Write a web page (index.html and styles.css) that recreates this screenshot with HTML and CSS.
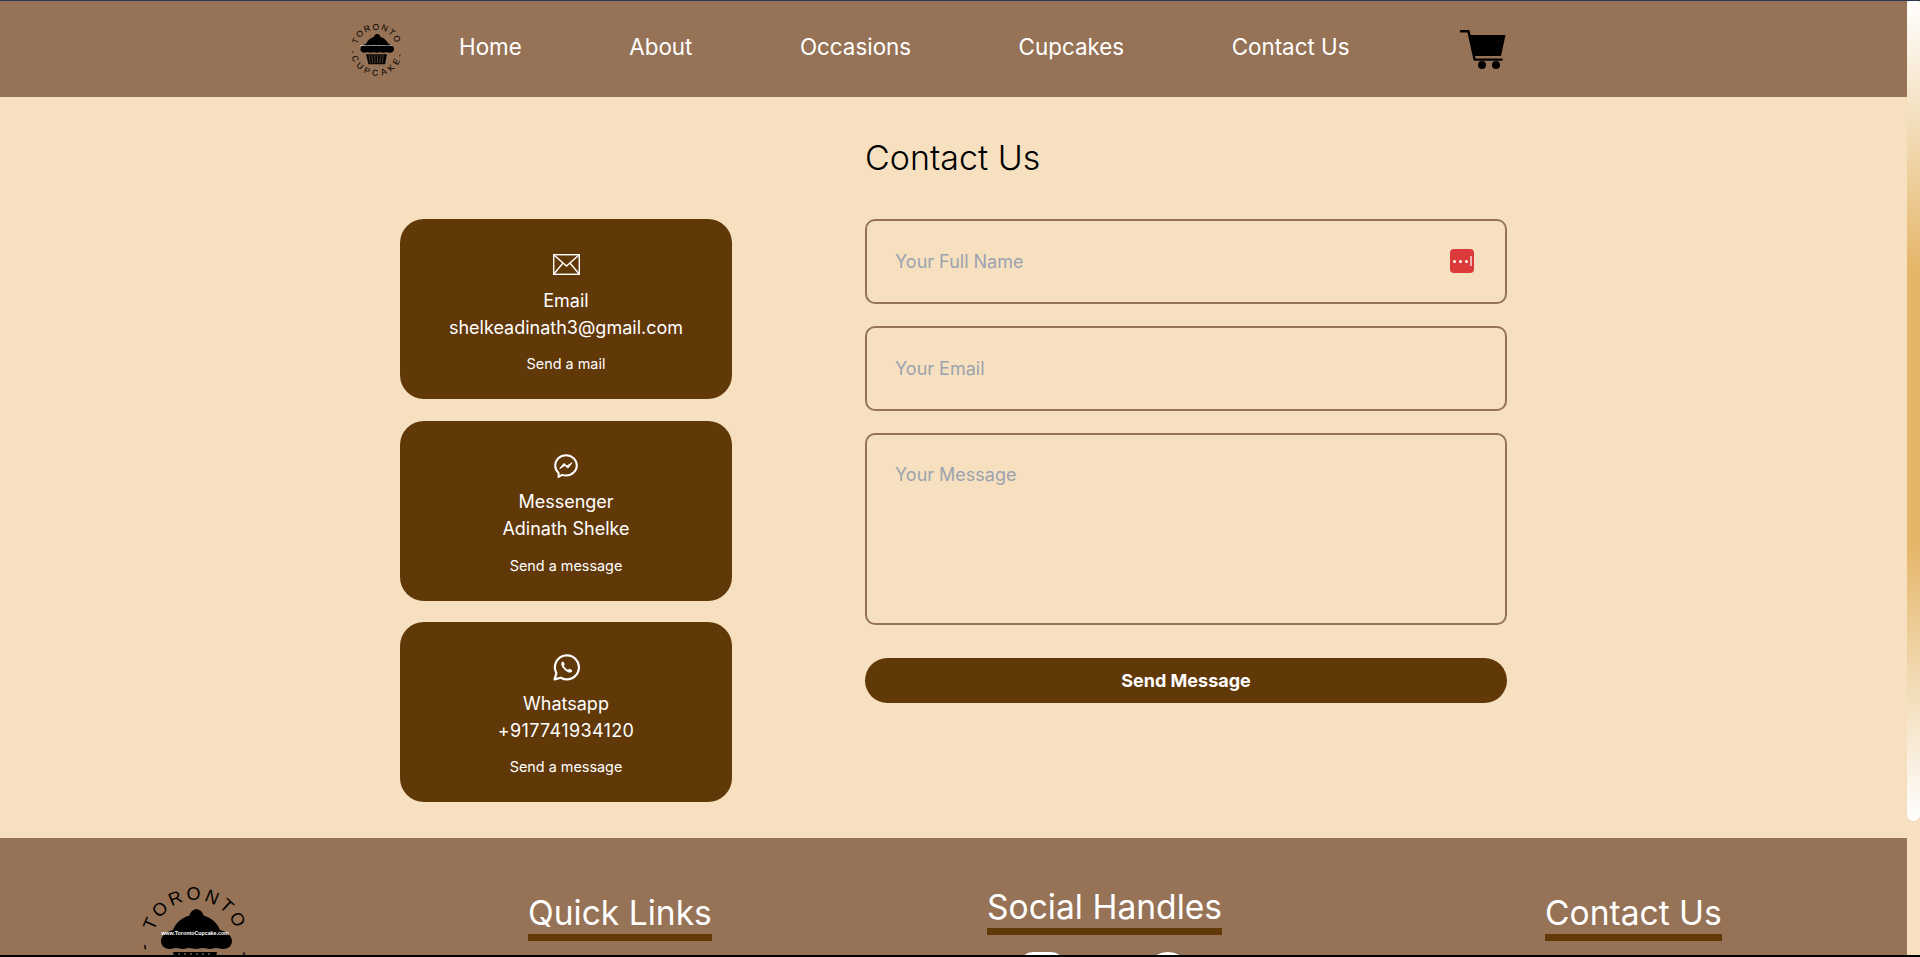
FILE: index.html
```html
<!DOCTYPE html>
<html lang="en">
<head>
  <meta charset="UTF-8">
  <meta name="viewport" content="width=device-width, initial-scale=1.0">
  <title>Toronto Cupcake - Contact Us</title>
  <link rel="stylesheet" href="styles.css">
</head>
<body>
  <div class="page">
    <div class="scroll-area">
      <header class="header">
        <svg class="logo-small" viewBox="0 0 120 120">
          <path id="arcTopA" d="M18 60a42 42 0 0 1 84 0" fill="none"/>
          <path id="arcBottomA" d="M5 60a55 55 0 0 0 110 0" fill="none"/>
          <text class="logo-ring"><textPath href="#arcTopA" startOffset="50%" text-anchor="middle">TORONTO</textPath></text>
          <text class="logo-ring logo-ring-wide"><textPath href="#arcBottomA" startOffset="50%" text-anchor="middle">-CUPCAKE-</textPath></text>
          <path d="M60 27c5 0 8 3 8.500 6.500 8 2 14 8 16.500 14.500 7 2 12 6 12 11 0 5-4 8-9 8-3 0-4-1-7-1s-4 1-6 1c-3 0-4-1-7-1s-4 1-7 1-4-1-7-1-4 1-6 1c-3 0-4-1-7-1s-4 1-6 1c-5 0-9-3-9-8 0-5 5-9 12-11 2.500-6.500 8.500-12.500 16.500-14.500.5-3.500 3.500-6.500 8.500-6.500z"/>
          <path d="M38 70h44l-4 21H43z"/>
          <path d="M44 71l3 18M50 71l2 18M56 71l1 18M62 71v18M68 71l-1 18M74 71l-2 18" stroke="#967256" stroke-width="1.2"/>
          <text class="logo-url" x="60" y="53" text-anchor="middle">www.TorontoCupcake.com</text>
        </svg>
        <nav class="nav">
          <a href="#">Home</a>
          <a href="#">About</a>
          <a href="#">Occasions</a>
          <a href="#">Cupcakes</a>
          <a href="#">Contact Us</a>
        </nav>
        <svg class="cart" viewBox="0 0 46 40">
          <path d="M1 2.200h7.500L14.600 30.600h27" fill="none" stroke="#000" stroke-width="2.400" stroke-linecap="round" stroke-linejoin="round"/>
          <path d="M9 6h36.500L41 27H13.500z"/>
          <circle cx="22" cy="36" r="4"/>
          <circle cx="36" cy="36" r="4"/>
        </svg>
      </header>

      <main class="contact">
        <div></div>
        <h1 class="contact-title">Contact Us</h1>

        <div class="cards">
          <div class="card">
            <div class="card-icon">
              <svg class="icon-mail" viewBox="0 0 27 21" fill="none" stroke="#fff" stroke-width="1.400">
                <rect x=".7" y=".7" width="25.600" height="19.600"/>
                <path d="M.7 .7l12.800 11.300L26.300 .7M.7 20.300l9.300-11.300M26.300 20.300l-9.300-11.300"/>
              </svg>
            </div>
            <p class="card-line">Email</p>
            <p class="card-line">shelkeadinath3@gmail.com</p>
            <a class="card-link" href="#">Send a mail</a>
          </div>
          <div class="card">
            <div class="card-icon">
              <svg class="icon-messenger" viewBox="0 0 24 24" fill="none" stroke="#fff" stroke-width="2">
                <path d="M12 1.200C6 1.200 1.200 5.700 1.200 11.500c0 3 1.300 5.600 3.400 7.500v3.800l3.500-1.900c1.200.4 2.500.6 3.900.6 6 0 10.800-4.500 10.800-10S18 1.200 12 1.200z"/>
                <path d="M5.800 14.500l4.100-5 3 2.600 5.200-3.300-4.200 5.200-3-2.600z" fill="#fff" stroke-width="1" stroke-linejoin="round"/>
              </svg>
            </div>
            <p class="card-line">Messenger</p>
            <p class="card-line">Adinath Shelke</p>
            <a class="card-link" href="#">Send a message</a>
          </div>
          <div class="card">
            <div class="card-icon">
              <svg class="icon-whatsapp" viewBox="0 0 27 27" fill="none" stroke="#fff" stroke-width="2.200">
                <path d="M1.600 25.400l1.800-6.300a12 12 0 1 1 4.500 4.600z" stroke-linejoin="round"/>
                <path d="M9.800 7.500c-1.300.5-1.900 2-1.400 3.600.9 2.900 4.200 6.300 7.300 7.300 1.600.5 3-.2 3.500-1.500.2-.6-2.500-2.300-3-2.100l-1.200 1c-1.500-.3-3.900-2.700-4.300-4.200l1-1.200c.2-.5-1.400-3.100-1.900-2.900z" fill="#fff" stroke="none"/>
              </svg>
            </div>
            <p class="card-line">Whatsapp</p>
            <p class="card-line card-phone">+917741934120</p>
            <a class="card-link" href="#">Send a message</a>
          </div>
        </div>

        <form class="form">
          <div class="field">
            <input class="input" type="text" placeholder="Your Full Name">
            <span class="pass-badge"><i></i><i></i><i></i><b></b></span>
          </div>
          <input class="input" type="email" placeholder="Your Email">
          <textarea class="input textarea" placeholder="Your Message"></textarea>
          <button class="send" type="button">Send Message</button>
        </form>
      </main>

      <footer class="footer">
        <svg class="logo-big" viewBox="0 0 120 120">
          <path id="arcTopB" d="M18 60a42 42 0 0 1 84 0" fill="none"/>
          <path id="arcBottomB" d="M5 60a55 55 0 0 0 110 0" fill="none"/>
          <text class="logo-ring"><textPath href="#arcTopB" startOffset="50%" text-anchor="middle">TORONTO</textPath></text>
          <text class="logo-ring logo-ring-wide"><textPath href="#arcBottomB" startOffset="50%" text-anchor="middle">-CUPCAKE-</textPath></text>
          <path d="M60 27c5 0 8 3 8.500 6.500 8 2 14 8 16.500 14.500 7 2 12 6 12 11 0 5-4 8-9 8-3 0-4-1-7-1s-4 1-6 1c-3 0-4-1-7-1s-4 1-7 1-4-1-7-1-4 1-6 1c-3 0-4-1-7-1s-4 1-6 1c-5 0-9-3-9-8 0-5 5-9 12-11 2.500-6.500 8.500-12.500 16.500-14.500.5-3.500 3.500-6.500 8.500-6.500z"/>
          <path d="M38 70h44l-4 21H43z"/>
          <path d="M44 71l3 18M50 71l2 18M56 71l1 18M62 71v18M68 71l-1 18M74 71l-2 18" stroke="#967256" stroke-width="1.2"/>
          <text class="logo-url" x="60" y="53" text-anchor="middle">www.TorontoCupcake.com</text>
        </svg>
        <div class="footer-col"><h3 class="footer-title">Quick Links</h3></div>
        <div class="footer-col footer-social">
          <h3 class="footer-title">Social Handles</h3>
          <div class="social-icons">
            <svg viewBox="0 0 46 46" fill="none" stroke="#fff" stroke-width="4">
              <rect x="2" y="2" width="42" height="42" rx="12"/>
              <circle cx="23" cy="23" r="10"/>
            </svg>
            <svg viewBox="0 0 46 46" fill="none" stroke="#fff" stroke-width="4">
              <circle cx="23" cy="23" r="21"/>
            </svg>
          </div>
        </div>
        <div class="footer-col"><h3 class="footer-title">Contact Us</h3></div>
      </footer>
    </div>
    <div class="scrollbar"><div class="scrollbar-thumb"></div></div>
  </div>
</body>
</html>
```

FILE: styles.css
```css
* {
  box-sizing: border-box;
}
body {
  margin: 0;
  background-color: #f6e0bf;
  font-family: 'Inter', sans-serif;
}
.logo-ring {
  font-family: 'Liberation Sans', sans-serif;
  font-size: 18px;
  letter-spacing: 3px;
}
.logo-ring-wide {
  letter-spacing: 7.500px;
}
.logo-url {
  font-family: 'Liberation Sans', sans-serif;
  font-size: 5.300px;
  font-weight: bold;
  fill: #fff;
}

/* page frame with a painted scrollbar */
.page {
  display: flex;
  height: 100vh;
  overflow: hidden;
  border-top: 1px solid #2d3a55;
  border-bottom: 2px solid #000;
}
.scroll-area {
  flex: 1;
  min-width: 0;
  overflow: hidden;
}
.scrollbar {
  width: 13px;
  flex-shrink: 0;
}
.scrollbar-thumb {
  height: 820px;
  border-radius: 6px 6px 10px 10px;
  background: linear-gradient(#fff, #e4b568 33%, #e4b568 66%, #fff);
}

/* header */
.header {
  display: flex;
  align-items: center;
  height: 96px;
  padding-left: 348px;
  background-color: #967256;
}
.logo-small {
  width: 57px;
  height: 57px;
  margin-right: 54px;
}
.nav {
  display: flex;
  gap: 107.500px;
  padding-bottom: 6px;
}
.nav a {
  color: #fff;
  font-size: 22.400px;
  text-decoration: none;
}
.cart {
  width: 46px;
  height: 40px;
  margin-left: 110px;
}

/* contact section */
.contact {
  display: grid;
  grid-template-columns: 332px 642px;
  column-gap: 133px;
  justify-content: center;
  padding: 41px 0 36px;
}
.contact-title {
  margin: 0 0 41px;
  font-size: 34px;
  font-weight: 300;
  line-height: 40px;
  color: #000;
}
.cards {
  display: flex;
  flex-direction: column;
  gap: 21.500px;
}
.card {
  display: flex;
  flex-direction: column;
  align-items: center;
  height: 180px;
  padding-top: 31px;
  border-radius: 24px;
  background-color: #613808;
  color: #fff;
}
.card-icon {
  display: flex;
  align-items: center;
  justify-content: center;
  height: 28px;
  margin-bottom: 8.500px;
}
.icon-mail {
  width: 27px;
  height: 21px;
}
.icon-messenger {
  width: 24px;
  height: 24px;
}
.icon-whatsapp {
  width: 27px;
  height: 27px;
}
.card-line {
  margin: 0;
  font-size: 18px;
  line-height: 27px;
}
.card-phone {
  letter-spacing: 0.350px;
}
.card-link {
  margin-top: 13.500px;
  color: #fff;
  font-size: 14.400px;
  line-height: 20px;
  text-decoration: none;
}

/* form */
.form {
  display: flex;
  flex-direction: column;
  gap: 22px;
}
.field {
  position: relative;
}
.input {
  display: block;
  width: 100%;
  height: 85px;
  padding: 0 28px;
  border: 2px solid #967256;
  border-radius: 10px;
  background: transparent;
  font-family: inherit;
  font-size: 18px;
  outline: none;
}
.input::placeholder {
  color: #9ca3af;
}
.textarea {
  height: 192px;
  padding-top: 29px;
  resize: none;
}
.pass-badge {
  position: absolute;
  top: 30px;
  right: 33px;
  display: flex;
  align-items: center;
  gap: 3px;
  width: 24px;
  height: 24px;
  padding-left: 3px;
  border-radius: 4px;
  background-color: #dc3a3a;
}
.pass-badge i {
  width: 3px;
  height: 3px;
  border-radius: 50%;
  background-color: #fff;
}
.pass-badge b {
  width: 2px;
  height: 10px;
  margin-left: -1px;
  background-color: #f3b4b4;
}
.send {
  height: 45px;
  margin-top: 11px;
  border: none;
  border-radius: 23px;
  background-color: #613808;
  color: #fff;
  font-family: inherit;
  font-size: 18px;
  font-weight: 700;
}

/* footer */
.footer {
  display: grid;
  grid-template-columns: 393px 459px 558px auto;
  align-items: start;
  height: 200px;
  padding: 56px 0 0 135px;
  background-color: #967256;
}
.logo-big {
  width: 120px;
  height: 120px;
  margin-top: -12px;
}
.footer-col {
  width: fit-content;
}
.footer-social {
  margin-top: -6px;
}
.footer-title {
  margin: 0;
  padding-bottom: 2px;
  border-bottom: 7px solid #613808;
  color: #fff;
  font-size: 33.600px;
  font-weight: 400;
  line-height: 38px;
}
.social-icons {
  display: flex;
  justify-content: center;
  gap: 80px;
  margin-top: 17px;
}
.social-icons svg {
  width: 46px;
  height: 46px;
}
```
